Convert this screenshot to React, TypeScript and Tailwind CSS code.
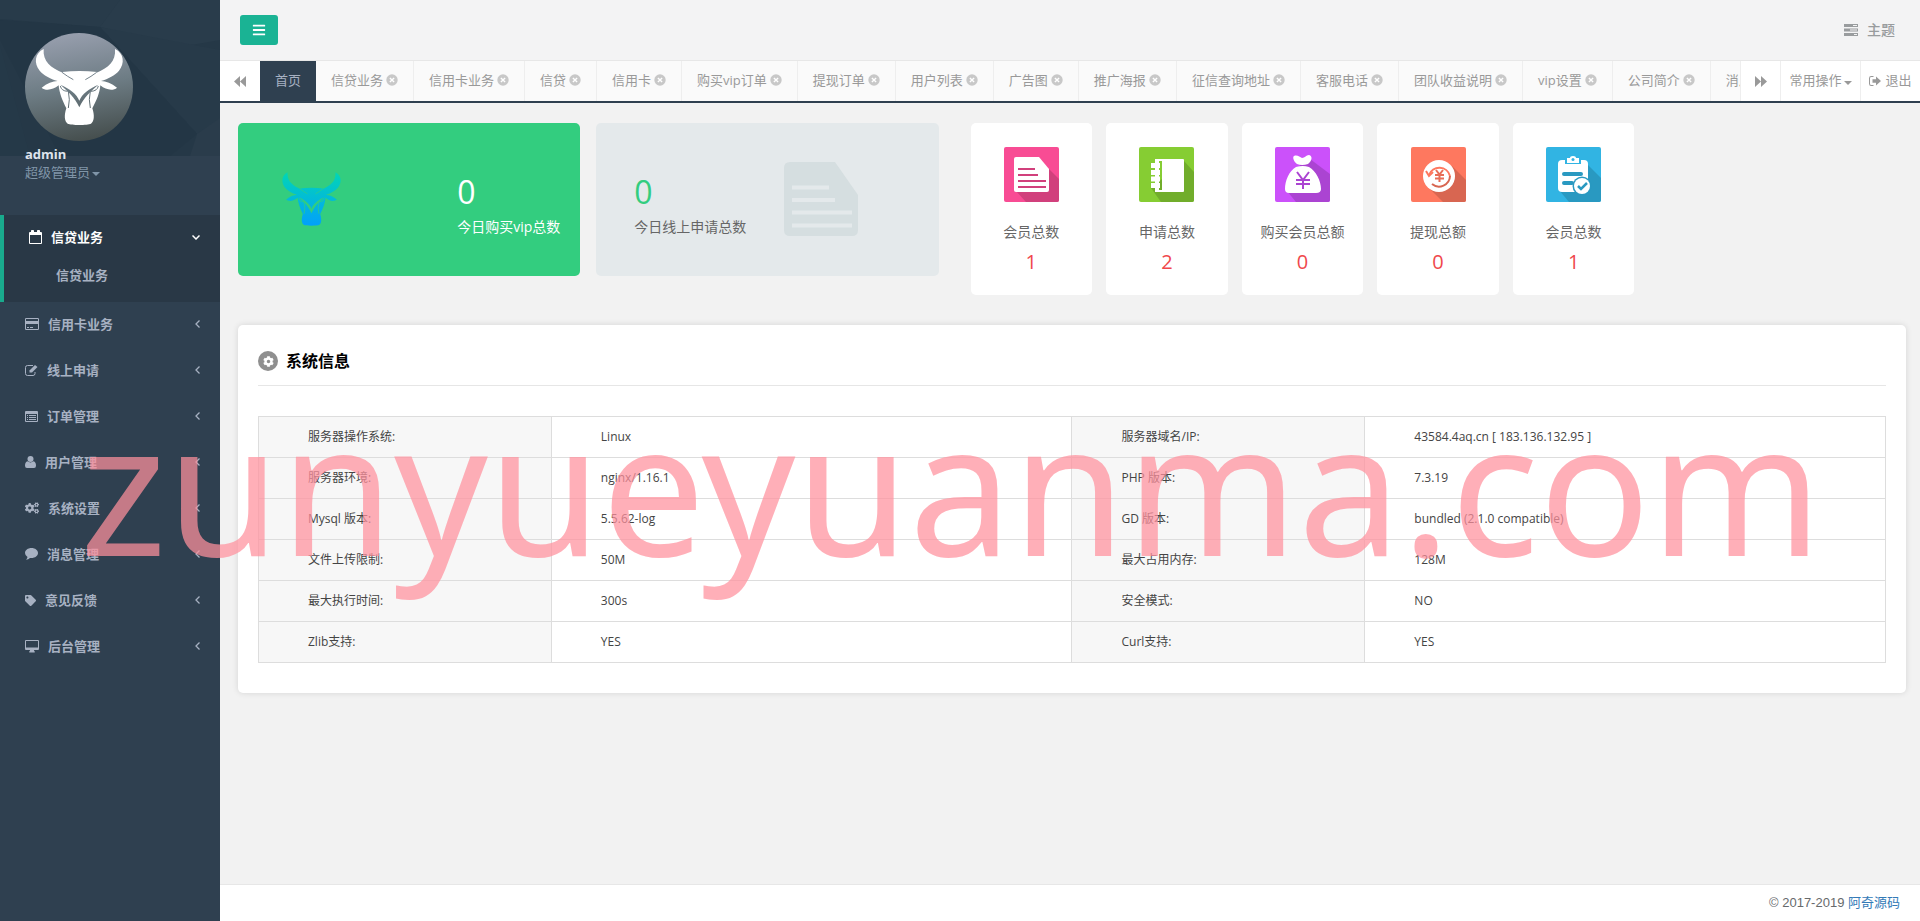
import type { ReactNode } from "react";
import { FaBars, FaCog, FaCogs, FaTag } from "react-icons/fa";

const menu = [
  { name: "信用卡业务", icon: <CardIcon /> },
  { name: "线上申请", icon: <EditIcon /> },
  { name: "订单管理", icon: <ListIcon /> },
  { name: "用户管理", icon: <UserIcon /> },
  { name: "系统设置", icon: <FaCogs size={14} /> },
  { name: "消息管理", icon: <CommentIcon /> },
  { name: "意见反馈", icon: <FaTag size={11} /> },
  { name: "后台管理", icon: <DesktopIcon /> },
];

const tabs = [
  "信贷业务",
  "信用卡业务",
  "信贷",
  "信用卡",
  "购买vip订单",
  "提现订单",
  "用户列表",
  "广告图",
  "推广海报",
  "征信查询地址",
  "客服电话",
  "团队收益说明",
  "vip设置",
  "公司简介",
  "消息管理",
];

const stats = [
  { name: "会员总数", value: 1, icon: <DocTile /> },
  { name: "申请总数", value: 2, icon: <NotebookTile /> },
  { name: "购买会员总额", value: 0, icon: <BagTile /> },
  { name: "提现总额", value: 0, icon: <RefundTile /> },
  { name: "会员总数", value: 1, icon: <ClipboardTile /> },
];

const systemInfo = [
  ["服务器操作系统:", "Linux", "服务器域名/IP:", "43584.4aq.cn [ 183.136.132.95 ]"],
  ["服务器环境:", "nginx/1.16.1", "PHP 版本:", "7.3.19"],
  ["Mysql 版本:", "5.5.62-log", "GD 版本:", "bundled (2.1.0 compatible)"],
  ["文件上传限制:", "50M", "最大占用内存:", "128M"],
  ["最大执行时间:", "300s", "安全模式:", "NO"],
  ["Zlib支持:", "YES", "Curl支持:", "YES"],
];

/* Menu icons */
function CalendarIcon() {
  return (
    <svg width="13" height="14" viewBox="0 0 13 14" fill="currentColor">
      <path
        fillRule="evenodd"
        d="M1 2h1V.8Q2 0 2.800 0h1.400Q5 0 5 .8V2h3V.8Q8 0 8.800 0h1.400Q11 0 11 .8V2h1q1 0 1 1v10q0 1-1 1H1q-1 0-1-1V3q0-1 1-1zM1 5v8h11V5z"
      />
    </svg>
  );
}

function CardIcon() {
  return (
    <svg width="14" height="12" viewBox="0 0 14 12" fill="currentColor">
      <path
        fillRule="evenodd"
        d="M1.200 0h11.600Q14 0 14 1.200v9.600q0 1.200-1.200 1.200H1.200Q0 12 0 10.800V1.200Q0 0 1.200 0zM1 1v2h12V1zM1 6v5h12V6zM2 9h2v1H2zM5 9h3v1H5z"
      />
    </svg>
  );
}

function EditIcon() {
  return (
    <svg width="13" height="12" viewBox="0 0 13 12" fill="none" stroke="currentColor">
      <path d="M8 1.500H2.500q-2 0-2 2v6q0 2 2 2h5.500q2 0 2-2V8" />
      <path d="M4.500 6.500 10 1l2.500 2L7 8.500H4.500z" fill="currentColor" stroke="none" />
    </svg>
  );
}

function ListIcon() {
  return (
    <svg width="13" height="11" viewBox="0 0 13 11" fill="currentColor">
      <path
        fillRule="evenodd"
        d="M1 0h11q1 0 1 1v9q0 1-1 1H1q-1 0-1-1V1q0-1 1-1zM1 3v7h11V3zM2 4h1v1H2zM4 4h7v1H4zM2 6h1v1H2zM4 6h7v1H4zM2 8h1v1H2zM4 8h7v1H4z"
      />
    </svg>
  );
}

function UserIcon() {
  return (
    <svg width="11" height="12" viewBox="0 0 11 12" fill="currentColor">
      <circle cx="5.500" cy="3" r="3" />
      <path d="M2.500 5.300Q5.500 7.500 8.500 5.300 11 6 11 9.800 11 12 9 12H2q-2 0-2-2.200Q0 6 2.500 5.300z" />
    </svg>
  );
}

function CommentIcon() {
  return (
    <svg width="13" height="12" viewBox="0 0 13 12" fill="currentColor">
      <path d="M6.500 0C10.100 0 13 2.200 13 5s-2.900 5-6.500 5q-.8 0-1.500-.1Q3.500 11.500 1 11.800q1.200-1 1.500-2.800Q0 7.500 0 5c0-2.800 2.900-5 6.500-5z" />
    </svg>
  );
}

function DesktopIcon() {
  return (
    <svg width="14" height="13" viewBox="0 0 14 13" fill="currentColor">
      <path
        fillRule="evenodd"
        d="M1 0h12q1 0 1 1v8q0 1-1 1H9q0 1 .8 1.500V12q0 .5-.5.5H4.700q-.5 0-.5-.5v-.5Q5 11 5 10H1q-1 0-1-1V1q0-1 1-1zM1 1v6.500h12V1z"
      />
    </svg>
  );
}

function AngleLeft() {
  return (
    <svg width="5" height="8" viewBox="0 0 5 8" fill="none" stroke="currentColor" strokeWidth="1.300">
      <path d="M4.500.5 1 4l3.500 3.500" />
    </svg>
  );
}

function AngleDown() {
  return (
    <svg width="8" height="5" viewBox="0 0 8 5" fill="none" stroke="currentColor" strokeWidth="1.500">
      <path d="M.5.5 4 4 7.500.5" />
    </svg>
  );
}

/* Toolbar icons */
function TasksIcon() {
  return (
    <svg width="14" height="12" viewBox="0 0 14 12" fill="currentColor">
      <path
        fillRule="evenodd"
        d="M0 0h14v3H0zM9 1v1h4V1zM0 4.500h14v3H0zM6 5.500v1h7v-1zM0 9h14v3H0zM10 10v1h3v-1z"
      />
    </svg>
  );
}

function SignOutIcon() {
  return (
    <svg width="12" height="10" viewBox="0 0 12 10" fill="currentColor">
      <path d="M4.500 0v1H2.300Q1 1 1 2.300v5.400Q1 9 2.300 9h2.200v1H2.200Q0 10 0 7.800V2.200Q0 0 2.200 0z" />
      <path d="M3.500 3.300H7V.5L12 5 7 9.500V6.700H3.500z" />
    </svg>
  );
}

function Backward({ className }: { className?: string }) {
  return (
    <svg width="12" height="11" viewBox="0 0 12 11" fill="currentColor" className={className}>
      <path d="M0 5.500 6 0v11zM6 5.500 12 0v11z" />
    </svg>
  );
}

function Caret() {
  return (
    <svg width="8" height="4" viewBox="0 0 8 4" fill="currentColor" className="mt-1">
      <path d="M0 0h8L4 4z" />
    </svg>
  );
}

function CloseIcon({ className }: { className: string }) {
  return (
    <svg width="12" height="12" viewBox="0 0 12 12" className={className}>
      <circle cx="6" cy="6" r="5.700" fill="currentColor" />
      <path d="m3.900 3.900 4.200 4.200M8.100 3.900 3.900 8.100" stroke="#fff" strokeWidth="1.400" />
    </svg>
  );
}

function Bull({ id, fill, viewBox, className }: { id: string; fill: string; viewBox: string; className: string }) {
  return (
    <svg viewBox={viewBox} className={className} preserveAspectRatio="none">
      <defs>
        <linearGradient id={`${id}-blue`} x1="0" y1="0" x2="0" y2="1">
          <stop offset="0" stopColor="#02d6b4" />
          <stop offset="1" stopColor="#02a0fb" />
        </linearGradient>
        <mask id={`${id}-mask`} maskUnits="userSpaceOnUse" x="75" y="99" width="324" height="324">
          <rect x="75" y="99" width="324" height="324" fill="#fff" />
          <path d="M181 254C208 265 231 283 238 302C245 283 268 265 295 254C272 274 252 292 238 322C224 292 204 274 181 254Z" />
          <g fill="none" stroke="#000" strokeWidth="3">
            <path d="M186 217Q203 230 220 239M290 217Q273 230 256 239" />
            <path d="M181 258Q184 273 203 274M295 258Q292 273 273 274" />
            <path d="M205 274Q211 298 205 324M271 274Q265 298 271 324" />
          </g>
        </mask>
      </defs>
      <path
        mask={`url(#${id}-mask)`}
        fill={fill}
        d="M131 147C128 185 152 203 190 219L186 216Q238 210 292 216L288 219C325 203 348 185 345 147C372 160 375 190 357 212C345 226 325 236 303 243C318 244 335 250 351 263C340 273 318 271 301 256C299 280 290 300 277 325C284 345 283 365 273 371C262 376 214 376 203 371C193 365 192 345 199 325C187 300 178 280 176 256C158 271 136 273 125 263C141 250 158 244 173 243C150 236 131 226 119 212C101 190 104 160 131 147Z"
      />
    </svg>
  );
}

/* Square tiles of the counters */
function Tile({ color, shade, shadow, children }: { color: string; shade: string; shadow: string; children: ReactNode }) {
  return (
    <svg width="55" height="55" viewBox="0 0 55 55">
      <rect width="55" height="55" rx="2" fill={color} />
      <path d={shadow} fill={shade} />
      {children}
    </svg>
  );
}

function DocTile() {
  return (
    <Tile color="#f84c94" shade="#d1407c" shadow="M45 22 55 32V53q0 2-2 2H22L12 44z">
      <path d="M12 10h23l10 12v21q0 2-2 2H12q-2 0-2-2V12q0-2 2-2z" fill="#fff" />
      <path d="M14 22h17M14 28h20M14 34h28M14 40h28" stroke="#d1407c" strokeWidth="2" />
    </Tile>
  );
}

function NotebookTile() {
  return (
    <Tile color="#86cd33" shade="#71ad2b" shadow="M45 14 55 25V53q0 2-2 2H22L12 41z">
      <rect x="23" y="12" width="22" height="33" rx="1" fill="#fff" />
      <path d="M24 13h-7v31h7" fill="none" stroke="#fff" strokeWidth="2" />
      <path d="M12 18.500h9M12 25.500h9M12 32h9M12 38.500h9" stroke="#fff" strokeWidth="5" />
      <path d="M18.500 14v29" stroke="#fff" strokeWidth="3" />
    </Tile>
  );
}

function BagTile() {
  return (
    <Tile color="#cb51fa" shade="#ab44d2" shadow="M31 9 55 27V53q0 2-2 2H21L12 44 24 20z">
      <path
        d="M22 17C18 14 17 9 20 8.500 23 8 25 10 27 11 30 11 31 8 34 8 38 9 37 14 33 17Q27 19 22 17zM21 20Q28 18 34 20C41 24 46 34 46 42Q46 46 41 46H14Q10 46 10 42C10 34 14 24 21 20z"
        fill="#fff"
      />
      <path d="M22 25 28 33 34 25M28 33V42M21 33H35M21 37H35" fill="none" stroke="#ab44d2" strokeWidth="2" />
    </Tile>
  );
}

function RefundTile() {
  return (
    <Tile color="#fe785f" shade="#d86651" shadow="M41 19 55 33V53q0 2-2 2H32L16 39z">
      <circle cx="28" cy="29" r="16" fill="#fff" />
      <path d="M18 28A11 11 0 0 1 39 29" fill="none" stroke="#fe785f" strokeWidth="2" />
      <path d="M39 29A11 11 0 0 1 21 37" fill="none" stroke="#d86651" strokeWidth="2" />
      <path d="M15 24 18 29 22 25" fill="none" stroke="#fe785f" strokeWidth="2" />
      <path d="M25 23 28.500 27.500 32 23M28.500 27V35M24 28H33M24 31.500H33" fill="none" stroke="#e86d57" strokeWidth="2" />
    </Tile>
  );
}

function ClipboardTile() {
  return (
    <Tile color="#31b4e3" shade="#2999c1" shadow="M42 18 55 31V53q0 2-2 2H23L13 43z">
      <rect x="12" y="13" width="30" height="32" rx="4" fill="#fff" />
      <path d="M19 13h16v4H19z" fill="#31b4e3" />
      <path d="M21 16v-5h3q0-2 3-2t3 2h3v5z" fill="#fff" />
      <circle cx="27" cy="12.500" r="1.500" fill="#31b4e3" />
      <path d="M18 27h17M18 36h8" stroke="#2999c1" strokeWidth="4" strokeLinecap="round" />
      <circle cx="36" cy="39" r="9.500" fill="#2999c1" />
      <circle cx="36" cy="39" r="8" fill="#fff" />
      <path d="m32 39 3 3 6-6" fill="none" stroke="#2999c1" strokeWidth="2.500" />
    </Tile>
  );
}

function Sidebar() {
  return (
    <aside className="w-[220px] shrink-0 bg-[#2f4050] text-[13px] leading-[18px]">
      {/* Profile */}
      <div className="relative h-[215px] px-[25px] pt-[33px]">
        <svg className="absolute inset-x-0 top-0 h-[156px] w-full" viewBox="0 0 220 156" preserveAspectRatio="none">
          <rect width="220" height="156" fill="#253847" />
          <path d="M0 0H120L100 27 0 19z" fill="#283b4a" />
          <path d="M120 0H220V40L180 47 100 27z" fill="#293c4b" />
          <path d="M100 27 220 50V120L197 134z" fill="#273a49" />
          <path d="M100 27 197 134 170 156H60L0 40V20z" fill="#233645" />
          <path d="M0 45 30 156H0z" fill="#253948" />
          <path d="M197 134 220 118V156H190z" fill="#2a3c4b" />
        </svg>
        <div className="relative">
          <div className="size-[108px] overflow-hidden rounded-full bg-linear-[170deg,#9da3b3,#6d7c84_50%,#3f4745]">
            <Bull id="avatar" fill="#fff" viewBox="75 99 324 324" className="size-full" />
          </div>
          <div className="mt-1 font-bold text-[#dfe4ed]">admin</div>
          <button className="flex items-center gap-[2px] text-[#8095a8]">
            超级管理员
            <Caret />
          </button>
        </div>
      </div>

      {/* Menu */}
      <nav className="font-bold text-[#a7b1c2]">
        <div className="border-l-4 border-[#19aa8d] bg-[#293846] pb-3">
          <a href="#" className="flex items-center gap-[9px] pt-[13px] pr-5 pb-[15px] pl-[25px] text-white">
            <CalendarIcon />
            <span className="flex-1">信贷业务</span>
            <AngleDown />
          </a>
          <a href="#" className="block pt-[5px] pb-[6px] pl-[52px]">
            信贷业务
          </a>
        </div>
        {menu.map((item) => (
          <a key={item.name} href="#" className="flex items-center gap-[9px] pt-[13px] pr-5 pb-[15px] pl-[25px]">
            {item.icon}
            <span className="flex-1">{item.name}</span>
            <AngleLeft />
          </a>
        ))}
      </nav>
    </aside>
  );
}

function TabBar() {
  return (
    <div className="flex h-[43px] border-t border-b-2 border-t-[#e7e7e7] border-b-[#2f4050] bg-white text-[13px] text-[#999999]">
      <button className="flex w-10 shrink-0 items-center justify-center" aria-label="向左">
        <Backward />
      </button>
      <div className="flex min-w-0 flex-1 overflow-hidden bg-[#fafafa] leading-[38px]">
        <a href="#" className="shrink-0 bg-[#2f4050] px-[15px] text-[#a7b1c2]">
          首页
        </a>
        {tabs.map((tab) => (
          <a key={tab} href="#" className="flex shrink-0 gap-[3px] border-r border-[#eeeeee] px-[15px] whitespace-nowrap">
            {tab}
            <CloseIcon className="mt-[13px] text-[#c8c8c8]" />
          </a>
        ))}
      </div>
      <button className="flex w-10 shrink-0 items-center justify-center border-l border-[#eeeeee]" aria-label="向右">
        <Backward className="rotate-180" />
      </button>
      <button className="flex w-20 shrink-0 items-center justify-center gap-[2px] border-l border-[#eeeeee]">
        常用操作
        <Caret />
      </button>
      <a href="#" className="flex w-[60px] shrink-0 items-center justify-center gap-1 border-l border-[#eeeeee]">
        <SignOutIcon />
        退出
      </a>
    </div>
  );
}

function Summary() {
  return (
    <div className="flex items-start gap-8 text-sm leading-5">
      <div className="grid w-[42%] grid-cols-2 gap-4">
        <div className="flex h-[153px] items-center justify-between rounded-[5px] bg-[#33cd7f] pr-5 pb-[2px] pl-11 text-white">
          <Bull id="card" fill="url(#card-blue)" viewBox="106 146 264 230" className="h-[54px] w-[59px]" />
          <div className="pt-3">
            <div className="text-[32px] leading-10">0</div>
            <div className="mt-[5px]">今日购买vip总数</div>
          </div>
        </div>
        <div className="flex h-[153px] items-center gap-[38px] rounded-[5px] bg-[#e4e9eb] pb-[2px] pl-[38px] text-[#666666]">
          <div className="pt-3">
            <div className="text-[32px] leading-10 text-[#33cd7f]">0</div>
            <div className="mt-[5px]">今日线上申请总数</div>
          </div>
          <svg width="74" height="74" viewBox="0 0 74 74">
            <path d="M6 0h45l23 33v35q0 6-6 6H6q-6 0-6-6V6q0-6 6-6z" fill="#d5dee0" />
            <path d="M8 25.500h37M8 38h43M8 50.500h60M8 63.500h60" stroke="#e4e9eb" strokeWidth="4" />
          </svg>
        </div>
      </div>
      <div className="grid w-[39.8%] grid-cols-5 gap-[14px]">
        {stats.map((stat, index) => (
          <div key={index} className="flex h-[172px] flex-col items-center rounded-[5px] bg-white pt-6 whitespace-nowrap">
            {stat.icon}
            <div className="mt-5 text-[#666666]">{stat.name}</div>
            <div className="mt-[6px] text-xl leading-7 text-[#f0484c]">{stat.value}</div>
          </div>
        ))}
      </div>
    </div>
  );
}

function SystemInfo() {
  return (
    <section className="mt-[30px] rounded-[5px] bg-white px-5 pb-[30px] shadow-[0_0_6px_rgba(0,0,0,0.12)]">
      <h2 className="flex h-[61px] items-center gap-2 border-b border-[#e6e6e6] pt-3 text-base font-semibold text-black">
        <span className="flex size-5 items-center justify-center rounded-full bg-[#8f8f8f] text-white">
          <FaCog size={11} />
        </span>
        系统信息
      </h2>
      <table className="mt-[30px] w-full table-fixed border-collapse text-left text-xs text-[#444444]">
        <colgroup>
          <col className="w-[18%]" />
          <col className="w-[32%]" />
          <col className="w-[18%]" />
          <col className="w-[32%]" />
        </colgroup>
        <tbody>
          {systemInfo.map(([name, value, otherName, otherValue]) => (
            <tr key={name} className="h-[41px]">
              <th className="border border-[#dddddd] bg-[#f7f7f7] pl-[49px] font-normal">{name}</th>
              <td className="border border-[#dddddd] pl-[49px]">{value}</td>
              <th className="border border-[#dddddd] bg-[#f7f7f7] pl-[49px] font-normal">{otherName}</th>
              <td className="border border-[#dddddd] pl-[49px]">{otherValue}</td>
            </tr>
          ))}
        </tbody>
      </table>
    </section>
  );
}

export default function App() {
  return (
    <div className="relative flex min-h-screen overflow-hidden bg-[#f3f3f4] font-['Open_Sans','Noto_Sans_CJK_SC',sans-serif]">
      <Sidebar />

      <div className="flex min-w-0 flex-1 flex-col">
        {/* Top Bar */}
        <header className="flex h-[60px] items-center justify-between pr-[25px] pl-5">
          <button
            className="flex h-[30px] w-[38px] items-center justify-center rounded-[3px] bg-[#1ab394] text-white"
            aria-label="菜单"
          >
            <FaBars size={14} />
          </button>
          <a href="#" className="flex items-center gap-[9px] text-sm font-medium text-[#999c9e]">
            <TasksIcon />
            主题
          </a>
        </header>
        <TabBar />

        <main className="flex-1 bg-[#f2f2f2] pt-5 pr-[14px] pl-[18px]">
          <Summary />
          <SystemInfo />
        </main>

        <footer className="h-[37px] border-t border-[#e7e7e7] bg-white pr-5 text-right font-['Liberation_Sans','Noto_Sans_CJK_SC',sans-serif] text-[13px] leading-9 text-[#676a6c]">
          © 2017-2019{" "}
          <a href="#" className="text-[#337ab7]">
            阿奇源码
          </a>
        </footer>
      </div>

      {/* Watermark */}
      <div className="pointer-events-none absolute top-[393px] left-[80px] font-['Noto_Sans',sans-serif] text-[184px] leading-none whitespace-nowrap text-[#ff909c]/72">
        zunyueyuanma.com
      </div>
    </div>
  );
}
